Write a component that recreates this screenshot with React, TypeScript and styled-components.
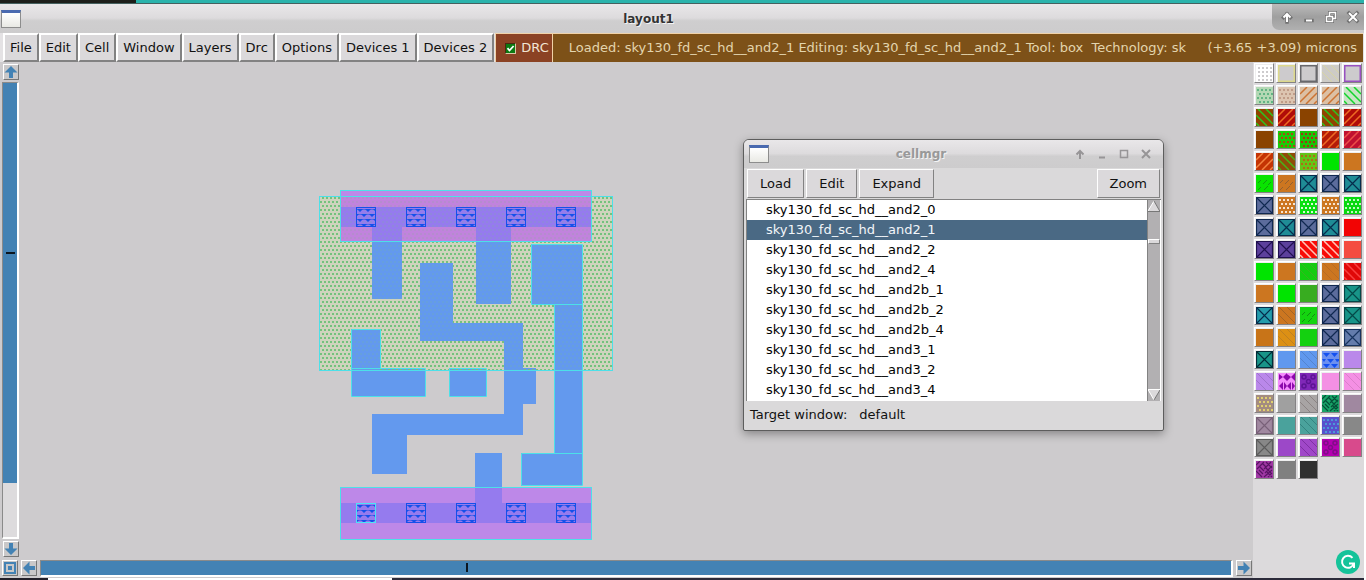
import React, { useState } from "react";
import styled, { createGlobalStyle } from "styled-components";

const GlobalStyle = createGlobalStyle`
  * { box-sizing: border-box; }
  html, body, #root { height: 100%; margin: 0; }
  body {
    background: #fff;
    color: #111;
    font: 13px/20px "DejaVu Sans", Verdana, sans-serif;
    overflow: hidden;
  }
  button { font: inherit; color: inherit; margin: 0; }
`;

const Desktop = styled.div`
  display: flex;
  flex-direction: column;
  height: 100%;
  padding-right: 2px;
`;

const DesktopStrip = styled.div`
  display: flex;
  flex: none;
  height: 4px;
  background: #2ab3ac;
  border-bottom: 1px solid #45605f;
`;

const DarkTab = styled.div`
  width: 10%;
  background: #1d1f1b;
`;

const BottomEdge = styled.div`
  flex: none;
  height: 2px;
  background: linear-gradient(to right, #22202a 48px, #fff 48px, #fff 392px, #2c2b3a 392px);
`;

const TitleBar = styled.header<{ $inner?: boolean }>`
  display: flex;
  flex: none;
  align-items: center;
  height: ${(p) => (p.$inner ? 28 : 29)}px;
  padding: 0 ${(p) => (p.$inner ? 6 : 0)}px 0 ${(p) => (p.$inner ? 5 : 1)}px;
  background: linear-gradient(#e9e7e9, #dddbdd 48%, #cfcecf 58%, #cdcccd);
  border-radius: ${(p) => (p.$inner ? "5px 5px 0 0" : "0")};
`;

const WindowIcon = styled.span`
  flex: none;
  width: 20px;
  height: 18px;
  border: 1px solid #8d8d8d;
  border-top: 3px solid #4a6ab0;
  background: linear-gradient(#fff, #e9e9e4);
`;

const Title = styled.h1<{ $faded?: boolean }>`
  flex: 1;
  margin: 0;
  padding-left: 4px;
  font-size: 12px;
  line-height: 20px;
  font-weight: bold;
  text-align: center;
  color: ${(p) => (p.$faded ? "#999" : "#333")};
  text-shadow: 1px 1px 0 #f4f4f4;
`;

const Controls = styled.div<{ $raised?: boolean }>`
  display: flex;
  flex: none;
  align-self: flex-start;
  align-items: center;
  height: ${(p) => (p.$raised ? 26 : 28)}px;
  padding-left: ${(p) => (p.$raised ? 4 : 0)}px;
  background: ${(p) => (p.$raised ? "linear-gradient(#bbb, #9f9f9f 50%, #b0b0b0)" : "none")};
  border-radius: 0 0 0 7px;
`;

const ControlButton = styled.button`
  display: grid;
  place-items: center;
  width: 22px;
  height: 26px;
  padding: 0;
  border: 0;
  background: none;
`;

const MenuBar = styled.nav`
  display: flex;
  flex: none;
  height: 29px;
  padding: 0 1px 0 3px;
  background: #e4e2e4;
`;

const MenuButton = styled.button`
  flex: none;
  padding: 0 5px;
  background: #dbd9db;
  border: 2px solid;
  border-color: #fff #828282 #828282 #fff;
  white-space: nowrap;
`;

const DrcToggle = styled.label`
  display: flex;
  flex: none;
  align-items: center;
  gap: 5px;
  margin-left: 1px;
  padding: 0 3px 0 9px;
  color: #f2e6d4;
  background: #8b4224;
  border: 1px solid #f0d2a8;
  border-bottom: 0;
`;

const DrcBox = styled.input`
  appearance: none;
  width: 11px;
  height: 11px;
  margin: 0;
  border: 1px solid;
  border-color: #4a2a10 #d9c9a8 #d9c9a8 #4a2a10;
  background: #d9d9d9;
  &:checked {
    background: #0c7a12
      url("data:image/svg+xml,%3Csvg xmlns='http://www.w3.org/2000/svg' viewBox='0 0 9 9'%3E%3Cpath d='M1.5 4.2l2 2.3L7.6 2' fill='none' stroke='white' stroke-width='1.8'/%3E%3C/svg%3E");
  }
`;

const StatusBar = styled.div`
  display: flex;
  flex: 1;
  align-items: center;
  gap: 18px;
  min-width: 0;
  padding: 0 6px 0 16px;
  color: #e3d5ae;
  background: #7d5118;
  border-top: 1px solid #f0d2a8;
`;

const StatusText = styled.span`
  flex: 1;
  min-width: 0;
  overflow: hidden;
  white-space: pre;
`;

const Coordinates = styled.span`
  flex: none;
  white-space: nowrap;
`;

const Workspace = styled.main`
  display: flex;
  flex: 1;
  min-height: 0;
  background: #cdcbcd;
`;

const ViewArea = styled.section`
  display: grid;
  flex: 1;
  min-width: 0;
  grid-template-columns: 20px 1fr;
  grid-template-rows: 1fr 20px;
`;

const VerticalScroll = styled.div`
  display: flex;
  flex-direction: column;
  align-items: center;
  gap: 2px;
  padding: 2px 0 1px 1px;
`;

const HorizontalScroll = styled.div`
  display: flex;
  grid-column: 1 / -1;
  align-items: center;
  gap: 3px;
  padding: 0 1px 0 2px;
`;

const ScrollButton = styled.button`
  display: grid;
  flex: none;
  place-items: center;
  width: 16px;
  height: 16px;
  padding: 0;
  background: #c9c8c9;
  border: 1px solid;
  border-color: #fff #777 #777 #fff;
`;

const Trough = styled.div<{ $vertical?: boolean }>`
  flex: 1;
  ${(p) => (p.$vertical ? "width: 17px;" : "height: 17px;")}
  background: #dddbdd;
  border: 2px solid #fff;
  border-left: 1px solid #8a8a8a;
  border-top: 1px solid #8a8a8a;
`;

const Thumb = styled.div<{ $vertical?: boolean }>`
  display: grid;
  place-items: center;
  width: 100%;
  height: ${(p) => (p.$vertical ? 88 : 100)}%;
  padding: ${(p) => (p.$vertical ? "0 0 60px" : "0 338px 0 0")};
  background: #4382b4;
`;

const Tick = styled.span<{ $vertical?: boolean }>`
  width: ${(p) => (p.$vertical ? 9 : 2)}px;
  height: ${(p) => (p.$vertical ? 2 : 9)}px;
  background: #0c1620;
`;

const Canvas = styled.div`
  position: relative;
  min-width: 0;
  min-height: 0;
`;

const Drawing = styled.svg`
  display: block;
  width: 100%;
  height: 100%;
`;

const Palette = styled.aside`
  position: relative;
  flex: none;
  padding: 1px 2px 0 1px;
  background: #dcdadc;
`;

const Swatches = styled.div`
  display: grid;
  grid-template-columns: repeat(5, 20px);
  grid-auto-rows: 20px;
  gap: 2px;
`;

const SwatchButton = styled.button`
  padding: 0;
  background: #eee;
  border: 1px solid;
  border-color: #fff #848284 #848284 #fff;
`;

const SwatchArt = styled.svg`
  display: block;
  width: 18px;
  height: 18px;
`;

const Assistant = styled.button`
  position: absolute;
  right: 4px;
  bottom: 4px;
  padding: 0;
  border: 0;
  background: none;
  svg { display: block; }
`;

const Dialog = styled.section`
  position: absolute;
  left: 723px;
  top: 77px;
  width: 421px;
  background: #dad9da;
  border: 1px solid #5d5d5d;
  border-radius: 6px 6px 2px 2px;
  box-shadow: 0 3px 10px rgba(0, 0, 0, 0.35);
`;

const Toolbar = styled.div`
  display: flex;
  gap: 2px;
  height: 31px;
  padding: 1px 3px;
`;

const ToolButton = styled.button<{ $end?: boolean }>`
  padding: 0 12px;
  margin-left: ${(p) => (p.$end ? "auto" : "0")};
  background: #dbd9db;
  border: 1px solid;
  border-color: #fff #828282 #828282 #fff;
`;

const ListFrame = styled.div`
  display: flex;
  height: 202px;
  margin: 0 2px;
  border-top: 1px solid #828282;
  border-left: 1px solid #828282;
  background: #fff;
`;

const CellList = styled.ul`
  flex: 1;
  margin: 0;
  padding: 0;
  list-style: none;
`;

const CellItem = styled.li<{ $selected: boolean }>`
  height: 20px;
  padding-left: 19px;
  line-height: 19px;
  color: ${(p) => (p.$selected ? "#f2f6fa" : "#000")};
  background: ${(p) => (p.$selected ? "#4a6984" : "#fff")};
`;

const ListScroll = styled.div`
  display: flex;
  flex-direction: column;
  justify-content: space-between;
  width: 14px;
  border-left: 1px solid #828282;
  border-right: 1px solid #fff;
  background: #b2b0b2;
  svg { display: block; }
`;

const ListThumb = styled.div`
  height: 5px;
  margin-bottom: 118px;
  background: #dbd9db;
  border: 1px solid;
  border-color: #fff #828282 #828282 #fff;
`;

const TargetLine = styled.footer`
  display: flex;
  gap: 12px;
  height: 29px;
  padding: 4px 6px;
`;

/* ---------- window control glyphs ---------- */

type Glyph = "shade" | "minimize" | "restore" | "maximize" | "close";

const glyphPaths: Record<Glyph, string> = {
  shade: "M7 12V4M3.500 7.500L7 4L10.500 7.500",
  minimize: "M4 10.500H10",
  restore: "M2.500 6.500H8.500V11.500H2.500ZM5.500 6V2.500H11.500V8.500H9",
  maximize: "M3.500 3.500H10.500V10.500H3.500Z",
  close: "M3 3L11 11M11 3L3 11",
};

function ControlGlyph({ glyph, light }: { glyph: Glyph; light?: boolean }) {
  const width = glyph === "restore" || glyph === "maximize" ? 1.5 : 2;
  return (
    <svg width="14" height="14" viewBox="0 0 14 14" fill="none" aria-hidden="true">
      {light && <path d={glyphPaths[glyph]} stroke="#727272" strokeWidth={width + 1.5} strokeLinecap="square" />}
      <path d={glyphPaths[glyph]} stroke={light ? "#fff" : "#979597"} strokeWidth={width} />
    </svg>
  );
}

function WindowControls({ glyphs, light }: { glyphs: Glyph[]; light?: boolean }) {
  return (
    <Controls $raised={light}>
      {glyphs.map((g) => (
        <ControlButton key={g} type="button" aria-label={g}>
          <ControlGlyph glyph={g} light={light} />
        </ControlButton>
      ))}
    </Controls>
  );
}

function Arrow({ angle }: { angle: number }) {
  return (
    <svg width="14" height="14" viewBox="0 0 14 14" aria-hidden="true">
      <path d="M7 1L13.500 7.500H9V13H5V7.500H.500Z" fill="#4382b4" transform={`rotate(${angle} 7 7)`} />
    </svg>
  );
}

/* ---------- layer palette ---------- */

type Kind =
  | "plain" | "outline" | "grid" | "dots" | "up" | "down" | "faint"
  | "dash" | "cross" | "tri" | "bow" | "rings" | "weave";

type Layer = [Kind, string, string?];

const TEAL = "#1f8c96";
const SLATE = "#5c6c9c";

const layers: Layer[] = [
  ["grid", "#cdcbcd", "#ffffff"], ["outline", "#cdcbcd", "#dcd88c"], ["outline", "#cdcbcd", "#68686c"], ["faint", "#cdcbc6", "#d8d4a4"], ["outline", "#cdcbcd", "#9850c0"],
  ["dots", "#b4d8b4", "#62b484"], ["dots", "#dcc4b0", "#c09c88"], ["up", "#dcc0a4", "#cc7434"], ["up", "#dcc0a4", "#cc7434"], ["down", "#c8e4c4", "#12d42c"],
  ["down", "#904400", "#2cc420"], ["up", "#b00c08", "#ee6c24"], ["plain", "#8a4300"], ["down", "#904400", "#2cc420"], ["up", "#b00c08", "#ee6c24"],
  ["plain", "#8a4300"], ["dots", "#18cc08", "#a84c10"], ["dots", "#18c408", "#a03810"], ["up", "#b41c08", "#ee6c24"], ["up", "#c01030", "#ec5048"],
  ["up", "#c43404", "#f48440"], ["down", "#904c08", "#48b418"], ["dots", "#64c418", "#b06c14"], ["plain", "#00e400"], ["plain", "#cc7620"],
  ["dash", "#08e400", "#109c10"], ["dash", "#cc7620", "#946030"], ["cross", TEAL, "#062c4c"], ["cross", SLATE, "#102850"], ["cross", TEAL, "#062c4c"],
  ["cross", SLATE, "#102850"], ["dots", "#cc7620", "#f8e4d0"], ["dots", "#08e010", "#d8f8d4"], ["dots", "#cc7620", "#f8e4d0"], ["dots", "#08d810", "#c0f8c0"],
  ["cross", SLATE, "#102850"], ["cross", TEAL, "#062c4c"], ["cross", SLATE, "#102850"], ["cross", TEAL, "#062c4c"], ["plain", "#f20404"],
  ["cross", "#5c409c", "#201050"], ["cross", "#5c409c", "#201050"], ["down", "#f80c08", "#ffc4b8"], ["down", "#f80c08", "#ffc4b8"], ["plain", "#f44c40"],
  ["plain", "#00e400"], ["plain", "#cc7620"], ["faint", "#14cc10", "#38b420"], ["faint", "#cc7620", "#b86c24"], ["down", "#e00808", "#fa4040"],
  ["plain", "#cc7620"], ["plain", "#00e400"], ["plain", "#38ac20"], ["cross", SLATE, "#102850"], ["cross", "#189488", "#044848"],
  ["cross", "#249cac", "#062c4c"], ["faint", "#cc7620", "#a46424"], ["dash", "#14d410", "#109010"], ["cross", SLATE, "#102850"], ["cross", "#189488", "#044848"],
  ["plain", "#c87418"], ["faint", "#dc9014", "#c08020"], ["plain", "#14d010"], ["cross", SLATE, "#102850"], ["cross", "#647cac", "#183460"],
  ["cross", "#189488", "#022c38"], ["plain", "#6098ee"], ["faint", "#6098ee", "#5484d0"], ["tri", "#6c90f0", "#1450f0"], ["plain", "#ba88ea"],
  ["faint", "#ba88ea", "#a074cc"], ["bow", "#f48cfc", "#8c08ac"], ["rings", "#8028b8", "#5c1494"], ["plain", "#f490e4"], ["faint", "#f490e4", "#dc80cc"],
  ["dots", "#a48c80", "#e0d070"], ["plain", "#a0a0a0"], ["faint", "#a8a4a4", "#8c8484"], ["weave", "#18a468", "#045038"], ["plain", "#a088a0"],
  ["cross", "#a088a0", "#786078"], ["plain", "#4aa29c"], ["faint", "#4aa29c", "#348480"], ["dots", "#5850cc", "#4c98d8"], ["plain", "#888888"],
  ["cross", "#888888", "#5c5c5c"], ["plain", "#9c48c8"], ["faint", "#a048c8", "#8030a4"], ["rings", "#b400b0", "#800c88"], ["plain", "#d84a8c"],
  ["weave", "#a038a4", "#581464"], ["plain", "#808080"], ["plain", "#303030"],
];

function SwatchMarks({ kind, ink }: { kind: Kind; ink: string }) {
  const points: React.ReactNode[] = [];
  switch (kind) {
    case "outline":
      return <rect x=".500" y=".500" width="16" height="16" fill="none" stroke={ink} strokeWidth="2" />;
    case "grid":
      return <path d="M0 1H17M0 5H17M0 9H17M0 13H17M0 17H17M1 0V17M5 0V17M9 0V17M13 0V17M17 0V17" stroke={ink} strokeWidth="2" />;
    case "dots":
      for (let r = 0; r < 4; r++)
        for (let c = 0; c < 4; c++)
          points.push(<rect key={`${r}-${c}`} x={c * 4 + (r % 2) * 2 + 1} y={r * 4 + 2} width="2" height="2" fill={ink} />);
      return <>{points}</>;
    case "up":
      return <path d="M0 7L7 0M0 15L15 0M6 17L17 6M14 17L17 14" stroke={ink} strokeWidth="1.500" />;
    case "down":
      return <path d="M10 0L17 7M2 0L17 15M0 6L11 17M0 14L3 17" stroke={ink} strokeWidth="1.500" />;
    case "faint":
      return <path d="M9 0L17 8M1 0L17 16M0 7L10 17" stroke={ink} strokeWidth="1" />;
    case "dash":
      return <path d="M2 8L5 5M7 9L11 5M12 10L15 7M2 15L5 12M8 15L12 11" stroke={ink} strokeWidth="1" />;
    case "cross":
      return <path d="M.500 .500H16.500V16.500H.500ZM1 1L16 16M16 1L1 16" stroke={ink} strokeWidth="1.200" fill="none" />;
    case "tri":
      return <path d="M1 2H8L4.500 6ZM9 2H16L12.500 6ZM0 8H4L2 11ZM5 8H12L8.500 12ZM13 8H17V10L15 11ZM1 13H8L4.500 17ZM9 13H16L12.500 17Z" fill={ink} />;
    case "bow":
      return <path d="M1 1L5 4L1 7ZM9 0V8L5 4ZM9 1L13 4L9 8ZM17 0V8L13 4ZM5 9V17L1 13ZM6 9L9 13L6 17ZM13 9V17L9 13ZM14 9L17 13L14 17Z" fill={ink} />;
    case "rings":
      return (
        <g fill="none" stroke={ink} strokeWidth="1.500">
          <circle cx="4" cy="4" r="2" /><circle cx="13" cy="4" r="2" /><circle cx="8.500" cy="8.500" r="2" />
          <circle cx="4" cy="13" r="2" /><circle cx="13" cy="13" r="2" />
        </g>
      );
    case "weave":
      return <path d="M0 4L4 0M1 8L8 1M6 2L10 6M10 1L16 7M4 6L8 10M0 10L6 16M3 9L7 13M8 8L15 1M9 12L16 5M9 6L15 12M8 16L16 9M11 11L16 16M12 16L16 12" stroke={ink} strokeWidth="1.200" />;
    default:
      return null;
  }
}

function Swatch({ layer }: { layer: Layer }) {
  const [kind, fill, ink = fill] = layer;
  return (
    <SwatchButton type="button" aria-label={`${kind} layer`}>
      <SwatchArt viewBox="0 0 18 18">
        <svg x="1" y="1" width="17" height="17" viewBox="0 0 17 17">
          <rect width="17" height="17" fill={fill} />
          <SwatchMarks kind={kind} ink={ink} />
        </svg>
      </SwatchArt>
    </SwatchButton>
  );
}

/* ---------- cell layout ---------- */

const contactColumns = [356, 406, 456, 506, 556];

function Contact({ x, y, active }: { x: number; y: number; active?: boolean }) {
  return (
    <g transform={`translate(${x} ${y})`}>
      <rect width="20" height="20" fill="url(#contact)" />
      <rect x="0.500" y="0.500" width="19" height="19" fill="none" stroke={active ? "#4ce4f4" : "#1450ea"} />
    </g>
  );
}

function CellLayout() {
  return (
    <Drawing role="img" aria-label="Cell layout">
      <defs>
        <pattern id="well" width="4" height="8" patternUnits="userSpaceOnUse">
          <rect width="2" height="2" y="1" fill="#74c27c" />
          <rect width="2" height="2" x="2" y="5" fill="#74c27c" />
        </pattern>
        <pattern id="contact" width="8" height="10" patternUnits="userSpaceOnUse">
          <path d="M1 2H7L4 5ZM0 7H3L0 10ZM5 7H8V10Z" fill="#1450ea" />
          <path d="M0 2.500H8M0 7.500H8" stroke="#1450ea" strokeOpacity="0.500" />
        </pattern>
      </defs>
      <g transform="translate(-20 -62)">
        <rect x="319" y="196" width="294" height="175" fill="#cfd3bd" />
        <g fill="#6399ee">
          <path d="M372 226H402V299H372ZM476 226H511V304H476ZM531 244H582V304H531ZM554 304H582V486H521V453H554Z" />
          <path d="M420 263H453V323H523V368H536V404H523V435H407V474H372V414H504V341H420Z" />
          <path d="M351 329H380V368H425V396H351ZM449 368H486V396H449ZM475 453H502V503H475Z" />
        </g>
        <path d="M340 190H592V242H340ZM340 487H592V540H340Z" fill="#bd88e8" />
        <path d="M340 207H592V227H511V242H476V227H402V242H372V227H340ZM340 503H475V487H502V503H592V523H340Z" fill="#957bee" />
        <rect x="340" y="196" width="252" height="11" fill="#c87cc8" opacity="0.350" />
        <path d="M340 227H372V242H340ZM402 227H476V242H402ZM511 227H592V242H511Z" fill="#c87cc8" opacity="0.350" />
        <rect x="319" y="196" width="294" height="175" fill="url(#well)" opacity="0.150" />
        <path
          d="M319 196H340V242H372V299H402V242H476V304H511V242H592V196H613V371H582V244H531V304H554V371H523V323H453V263H420V341H504V371H380V329H351V371H319Z"
          fill="url(#well)"
        />
        <g fill="none" stroke="#4ce0e8">
          <rect x="319.500" y="196.500" width="293" height="174" />
          <rect x="340.500" y="190.500" width="251" height="51" />
          <rect x="340.500" y="487.500" width="251" height="52" />
          <path d="M582.500 453.500H521.500V485.500H582.500V244.500H531.500V304.500H582.500M554.500 304.500V453.500" />
          <path d="M351.500 368.500V329.500H380.500V368.500M351.500 368.500H425.500V396.500H351.500ZM449.500 368.500H486.500V396.500H449.500Z" />
        </g>
        {contactColumns.map((x) => <Contact key={`t${x}`} x={x} y={207} />)}
        {contactColumns.map((x, i) => <Contact key={`b${x}`} x={x} y={503} active={i === 0} />)}
      </g>
    </Drawing>
  );
}

/* ---------- cell manager ---------- */

const cells = ["and2_0", "and2_1", "and2_2", "and2_4", "and2b_1", "and2b_2", "and2b_4", "and3_1", "and3_2", "and3_4"].map(
  (name) => `sky130_fd_sc_hd__${name}`,
);

function CellManager() {
  const [selected, setSelected] = useState(cells[1]);
  return (
    <Dialog aria-label="cellmgr">
      <TitleBar $inner>
        <WindowIcon />
        <Title as="h2" $faded>cellmgr</Title>
        <WindowControls glyphs={["shade", "minimize", "maximize", "close"]} />
      </TitleBar>
      <Toolbar>
        <ToolButton type="button">Load</ToolButton>
        <ToolButton type="button">Edit</ToolButton>
        <ToolButton type="button">Expand</ToolButton>
        <ToolButton type="button" $end>Zoom</ToolButton>
      </Toolbar>
      <ListFrame>
        <CellList role="listbox" aria-label="Cells">
          {cells.map((cell) => (
            <CellItem
              key={cell}
              role="option"
              aria-selected={cell === selected}
              $selected={cell === selected}
              onClick={() => setSelected(cell)}
            >
              {cell}
            </CellItem>
          ))}
        </CellList>
        <ListScroll aria-hidden="true">
          <svg width="12" height="12" viewBox="0 0 12 12">
            <path d="M6 1L0 11H12Z" fill="#dbd9db" />
            <path d="M6 1L0 11" stroke="#fff" />
            <path d="M6 1L12 11.500H0" stroke="#777" fill="none" />
          </svg>
          <ListThumb />
          <svg width="12" height="12" viewBox="0 0 12 12">
            <path d="M0 1H12L6 11Z" fill="#dbd9db" />
            <path d="M6 11L0 .500H12" stroke="#fff" fill="none" />
            <path d="M12 1L6 11" stroke="#777" />
          </svg>
        </ListScroll>
      </ListFrame>
      <TargetLine>
        <span>Target window:</span>
        <span>default</span>
      </TargetLine>
    </Dialog>
  );
}

const menus = ["File", "Edit", "Cell", "Window", "Layers", "Drc", "Options", "Devices 1", "Devices 2"];

export default function App() {
  return (
    <Desktop>
      <GlobalStyle />
      <DesktopStrip><DarkTab /></DesktopStrip>
      <TitleBar>
        <WindowIcon />
        <Title>layout1</Title>
        <WindowControls light glyphs={["shade", "minimize", "restore", "close"]} />
      </TitleBar>
      <MenuBar>
        {menus.map((menu) => <MenuButton key={menu} type="button">{menu}</MenuButton>)}
        <DrcToggle>
          <DrcBox type="checkbox" defaultChecked />
          DRC
        </DrcToggle>
        <StatusBar>
          <StatusText>{"Loaded: sky130_fd_sc_hd__and2_1 Editing: sky130_fd_sc_hd__and2_1 Tool: box  Technology: sk"}</StatusText>
          <Coordinates>(+3.65 +3.09) microns</Coordinates>
        </StatusBar>
      </MenuBar>
      <Workspace>
        <ViewArea>
          <VerticalScroll>
            <ScrollButton type="button" aria-label="Scroll up"><Arrow angle={0} /></ScrollButton>
            <Trough $vertical><Thumb $vertical><Tick $vertical /></Thumb></Trough>
            <ScrollButton type="button" aria-label="Scroll down"><Arrow angle={180} /></ScrollButton>
          </VerticalScroll>
          <Canvas>
            <CellLayout />
            <CellManager />
          </Canvas>
          <HorizontalScroll>
            <ScrollButton type="button" aria-label="Fit view">
              <svg width="14" height="14" viewBox="0 0 14 14" fill="none" stroke="#4382b4" strokeWidth="2" aria-hidden="true">
                <path d="M2 2H12V12H2ZM6 6H8V8H6Z" />
              </svg>
            </ScrollButton>
            <ScrollButton type="button" aria-label="Scroll left"><Arrow angle={270} /></ScrollButton>
            <Trough><Thumb><Tick /></Thumb></Trough>
            <ScrollButton type="button" aria-label="Scroll right"><Arrow angle={90} /></ScrollButton>
          </HorizontalScroll>
        </ViewArea>
        <Palette aria-label="Layers">
          <Swatches>
            {layers.map((layer, i) => <Swatch key={i} layer={layer} />)}
          </Swatches>
          <Assistant type="button" aria-label="Writing assistant">
            <svg width="24" height="24" viewBox="0 0 24 24" aria-hidden="true">
              <circle cx="12" cy="12" r="12" fill="#15c39a" />
              <path d="M16.500 7.800A6 6 0 1 0 17.800 13.500M13 13.500H18V18" fill="none" stroke="#fff" strokeWidth="2" />
            </svg>
          </Assistant>
        </Palette>
      </Workspace>
      <BottomEdge />
    </Desktop>
  );
}
